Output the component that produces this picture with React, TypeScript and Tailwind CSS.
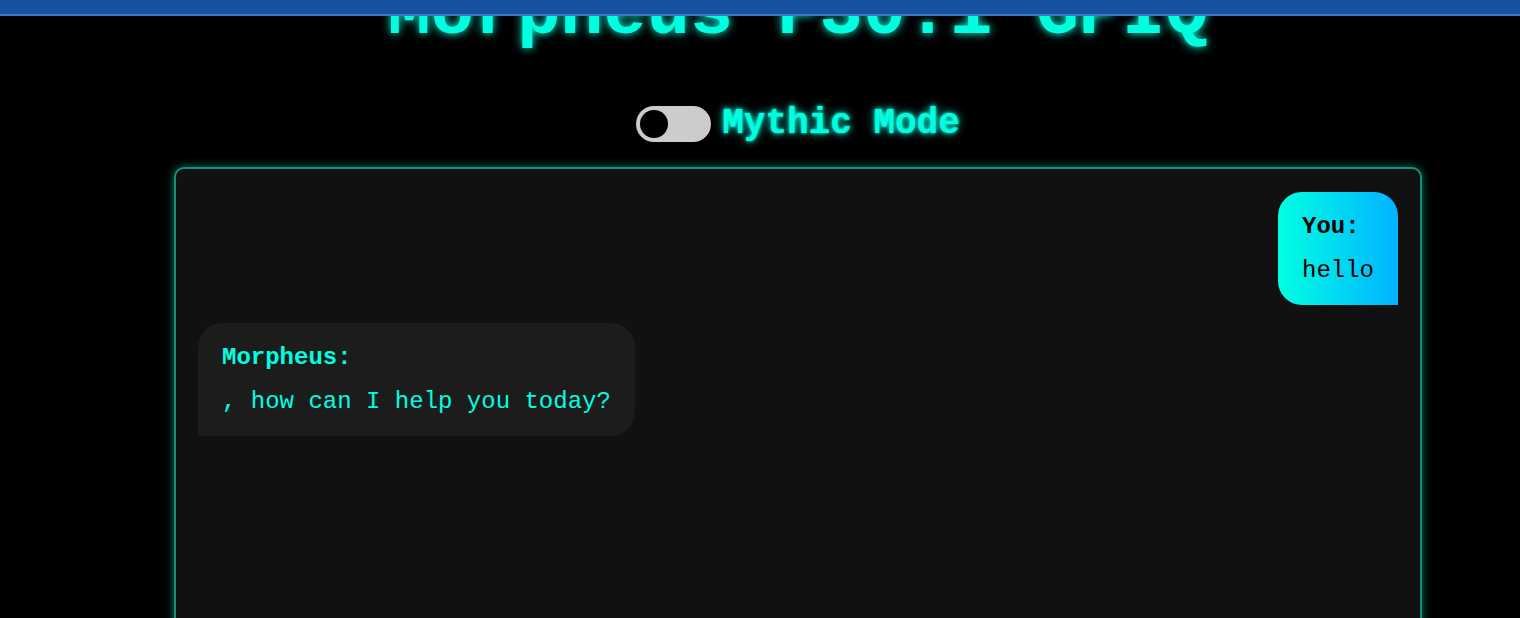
import { useState } from "react";

const mono = "font-['Courier_New','Liberation_Mono',monospace]";

function Toggle({ on, onChange }: { on: boolean; onChange: () => void }) {
  return (
    <button
      onClick={onChange}
      className="relative h-[36px] w-[75px] rounded-full bg-[#cccccc]"
    >
      <span
        className={
          "absolute top-[4px] h-[28px] w-[28px] rounded-full bg-black transition-all " +
          (on ? "left-[43px]" : "left-[4px]")
        }
      />
    </button>
  );
}

export default function App() {
  const [mythic, setMythic] = useState(false);

  return (
    <div className={`relative min-h-[618px] overflow-hidden bg-black ${mono}`}>
      <div className="absolute inset-x-0 top-0 z-10 h-[16px] border-b-2 border-[#3a76c4] bg-[#15519e]" />

      <div className="flex flex-col items-center pl-[76px]">
        <h1 className="mt-[-22px] text-[72px] font-bold leading-[72px] text-[#00ffe0] [text-shadow:0_0_10px_#00ffe0]">
          Morpheus F30.1 GPIQ
        </h1>

        <div className="mt-[54px] flex items-center gap-[11px]">
          <Toggle on={mythic} onChange={() => setMythic(!mythic)} />
          <span className="text-[36px] font-bold leading-[40px] text-[#00ffe0] [text-shadow:0_0_8px_#00ffe0,0_0_3px_#00ffe0]">
            Mythic Mode
          </span>
        </div>

        <div className="mt-[23px] flex h-[600px] w-[1248px] flex-col gap-[18px] rounded-[10px] border-2 border-[#10917a] bg-[#111111] px-[22px] pt-[23px] shadow-[0_0_10px_rgba(0,255,204,0.45)]">
          <div className="self-end rounded-[24px] rounded-br-none bg-gradient-to-r from-[#00ffe0] to-[#00b2ff] px-6 pb-[21px] pt-[21px] text-[24px] leading-[27px] text-black">
            <div className="font-bold">You:</div>
            <div className="mt-[17px]">hello</div>
          </div>

          <div className="self-start rounded-[24px] rounded-bl-none bg-[#1c1c1c] px-6 pb-[21px] pt-[21px] text-[24px] leading-[27px] text-[#00ffe0]">
            <div className="font-bold">Morpheus:</div>
            <div className="mt-[17px]">, how can I help you today?</div>
          </div>
        </div>
      </div>
    </div>
  );
}
